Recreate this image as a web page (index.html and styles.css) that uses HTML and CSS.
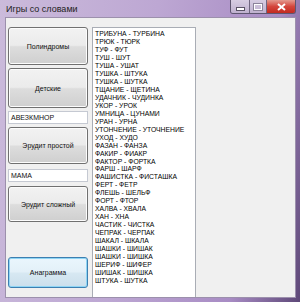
FILE: index.html
```html
<!DOCTYPE html>
<html lang="ru">

<head>
    <meta charset="UTF-8">
    <meta name="viewport" content="width=device-width, initial-scale=1.0">
    <title>Игры со словами</title>
    <link rel="stylesheet" href="styles.css">
</head>

<body>
    <div class="window">
        <div class="titlebar">
            <span class="title">Игры со словами</span>
            <div class="controls">
                <span class="ctl ctl-min"><i class="min-bar"></i></span>
                <span class="ctl ctl-max"><i class="max-box"></i></span>
                <span class="ctl ctl-close">
                    <svg width="9" height="8" viewBox="0 0 9 8">
                        <path d="M1 1 L8 7 M8 1 L1 7" stroke="#fff" stroke-width="2" />
                    </svg>
                </span>
            </div>
        </div>

        <div class="client">
            <div class="left-col">
                <div class="btn btn-1">Полиндромы</div>
                <div class="btn btn-2">Детские</div>
                <div class="textbox tb-1">АВЕЗКМНОР</div>
                <div class="btn btn-3">Эрудит простой</div>
                <div class="textbox tb-2">МАМА</div>
                <div class="btn btn-4">Эрудит сложный</div>
                <div class="btn btn-5 btn-default">Анаграмма</div>
            </div>

            <ul class="listbox">
                <li>ТРИБУНА - ТУРБИНА</li>
                <li>ТРЮК - ТЮРК</li>
                <li>ТУФ - ФУТ</li>
                <li>ТУШ - ШУТ</li>
                <li>ТУША - УШАТ</li>
                <li>ТУШКА - ШТУКА</li>
                <li>ТУШКА - ШУТКА</li>
                <li>ТЩАНИЕ - ЩЕТИНА</li>
                <li>УДАЧНИК - ЧУДИНКА</li>
                <li>УКОР - УРОК</li>
                <li>УМНИЦА - ЦУНАМИ</li>
                <li>УРАН - УРНА</li>
                <li>УТОНЧЕНИЕ - УТОЧНЕНИЕ</li>
                <li>УХОД - ХУДО</li>
                <li>ФАЗАН - ФАНЗА</li>
                <li>ФАКИР - ФИАКР</li>
                <li>ФАКТОР - ФОРТКА</li>
                <li>ФАРШ - ШАРФ</li>
                <li>ФАШИСТКА - ФИСТАШКА</li>
                <li>ФЕРТ - ФЕТР</li>
                <li>ФЛЕШЬ - ШЕЛЬФ</li>
                <li>ФОРТ - ФТОР</li>
                <li>ХАЛВА - ХВАЛА</li>
                <li>ХАН - ХНА</li>
                <li>ЧАСТИК - ЧИСТКА</li>
                <li>ЧЕПРАК - ЧЕРПАК</li>
                <li>ШАКАЛ - ШКАЛА</li>
                <li>ШАШКИ - ШИШАК</li>
                <li>ШАШКИ - ШИШКА</li>
                <li>ШЕРИФ - ШИФЕР</li>
                <li>ШИШАК - ШИШКА</li>
                <li>ШТУКА - ШУТКА</li>
            </ul>
        </div>
    </div>
</body>

</html>
```

FILE: styles.css
```css
body {
    margin: 0;
    padding: 0;
    font-family: 'Liberation Sans', Arial, sans-serif;
    background-color: #2b2236;
}

.window {
    width: 300px;
    height: 302px;
    display: flex;
    flex-direction: column;
    background: linear-gradient(100deg, #cbbbdb 0%, #bda7d3 45%, #a88cc4 80%, #5e4878 100%);
    overflow: hidden;
}

/* title bar */
.titlebar {
    height: 17px;
    flex: none;
    display: flex;
    align-items: flex-start;
}

.title {
    padding-left: 6px;
    line-height: 19px;
    font-size: 9px;
    color: #1e1e1e;
}

.controls {
    margin-left: auto;
    margin-right: 4px;
    display: flex;
    height: 13px;
    border: 1px solid #5e5670;
    border-top: none;
    border-radius: 0 0 3px 3px;
    overflow: hidden;
}

.ctl {
    height: 13px;
    display: flex;
    align-items: center;
    justify-content: center;
}

.ctl-min {
    width: 18px;
    background: linear-gradient(#d7cde2, #bfb1cf);
    border-right: 1px solid #6f6680;
}

.ctl-max {
    width: 16px;
    background: linear-gradient(#d7cde2, #bfb1cf);
    border-right: 1px solid #6f6680;
}

.ctl-close {
    width: 28px;
    background: linear-gradient(#e39a8f, #d4463c 50%, #c22a20);
}

.min-bar {
    display: block;
    width: 7px;
    height: 2px;
    margin-top: 4px;
    background: #fff;
    border: 1px solid #5a5366;
}

.max-box {
    display: block;
    width: 6px;
    height: 4px;
    border: 1px solid #fff;
    outline: 1px solid #8c839a;
}

/* client area */
.client {
    flex: 1;
    margin: 0 4px 4px 5px;
    background-color: #f0f0f0;
    border: 1px solid #9c90ac;
    display: flex;
    align-items: flex-start;
    padding: 9px 0 0 2px;
    gap: 4px;
    overflow: hidden;
}

.left-col {
    width: 80px;
    display: flex;
    flex-direction: column;
}

.btn {
    box-sizing: border-box;
    border: 1px solid #707070;
    border-radius: 3px;
    background: linear-gradient(#f2f2f2 0%, #ebebeb 48%, #dddddd 52%, #cfcfcf 100%);
    box-shadow: inset 0 0 0 1px #fcfcfc;
    display: flex;
    align-items: center;
    justify-content: center;
    font-size: 7px;
    color: #111;
}

.btn-1 {
    height: 38px;
}

.btn-2 {
    height: 40px;
    margin-top: 3px;
}

.btn-3 {
    height: 37px;
    margin-top: 3px;
}

.btn-4 {
    height: 36px;
    margin-top: 4px;
}

.btn-5 {
    height: 31px;
    margin-top: 35px;
}

.btn-default {
    border-color: #3c7fb1;
    box-shadow: inset 0 0 0 1px #8fd5f4;
    background: linear-gradient(#eaf6fd 0%, #e3f0f8 48%, #d7e8f2 52%, #cbdfec 100%);
}

.textbox {
    box-sizing: border-box;
    height: 13px;
    margin-top: 3px;
    background: #fff;
    border: 1px solid #c5c9d2;
    font-size: 7px;
    line-height: 11px;
    padding-left: 2px;
    color: #111;
}

.tb-2 {
    margin-top: 5px;
}

/* list */
.listbox {
    width: 104px;
    height: 300px;
    box-sizing: border-box;
    margin: 0;
    padding: 2px 0 0 2px;
    list-style: none;
    background: #fff;
    border: 1px solid #a9adb5;
    font-size: 6.8px;
    line-height: 7.97px;
    color: #000;
    white-space: nowrap;
    overflow: hidden;
}
```
